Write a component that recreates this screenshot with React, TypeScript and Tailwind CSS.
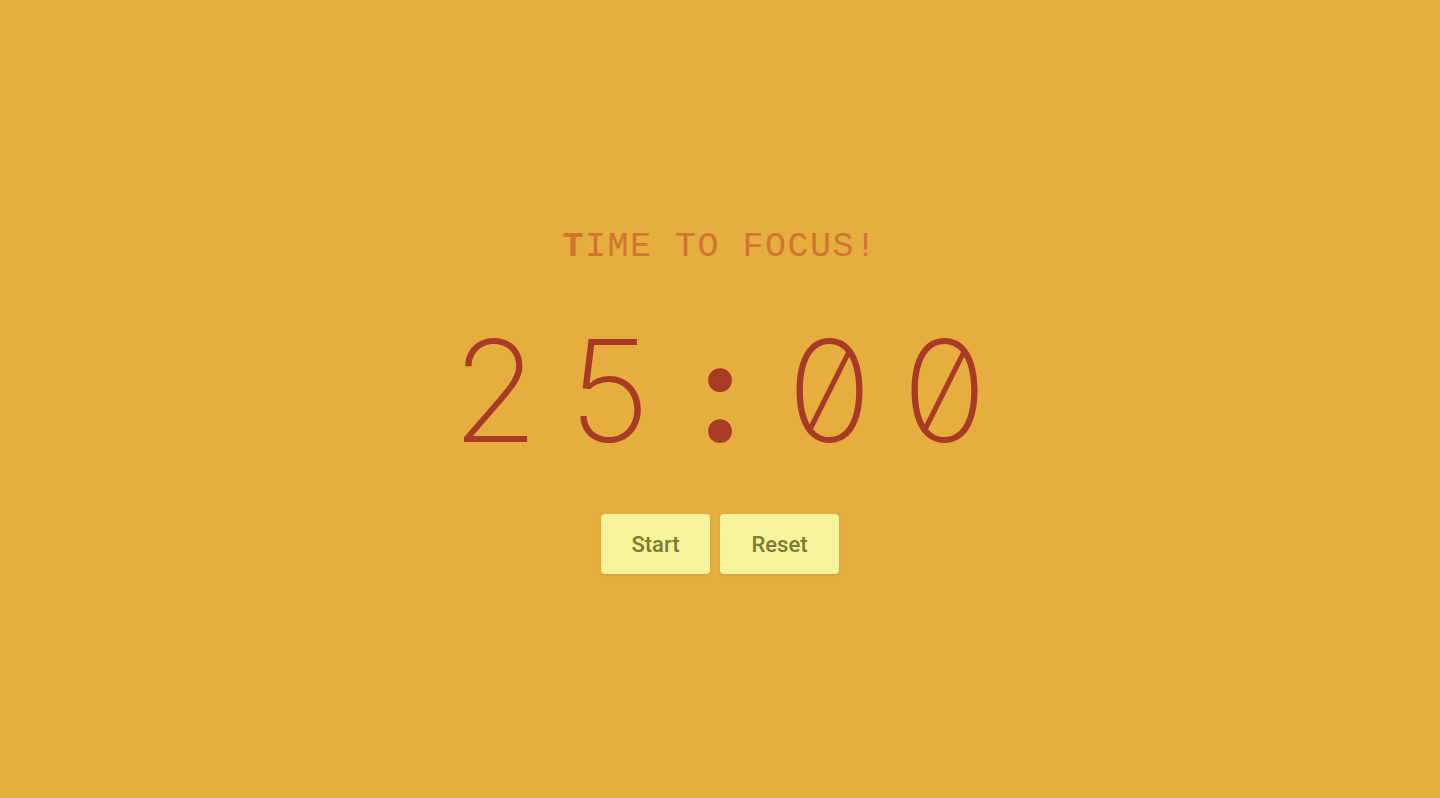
export default function App() {
  return (
    <main className="flex min-h-[798px] w-full flex-col items-center bg-[#e5ae3f] pt-[226px]">
      <h1 className="font-['Liberation_Mono',monospace] text-[35px] leading-[42px] font-normal tracking-[1.5px] text-[#d0752f]">
        <span className="font-bold">T</span>IME TO FOCUS!
      </h1>

      <div className="mt-[48px] flex items-baseline font-['Inter',sans-serif] text-[141px] leading-[150px] font-extralight text-[#a93a26] tabular-nums slashed-zero">
        <span className="tracking-[24px]">2</span>
        <span>5</span>
        <span className="mx-[45px] font-bold">:</span>
        <span className="tracking-[24px]">0</span>
        <span>0</span>
      </div>

      <div className="mt-[48px] flex gap-[10px]">
        <button
          type="button"
          className="h-[60px] w-[109px] rounded-[4px] bg-[#f6f49b] font-['Roboto',sans-serif] text-[22px] font-medium text-[#7f7a33] shadow-[0_1px_3px_rgba(0,0,0,0.12)]"
        >
          Start
        </button>
        <button
          type="button"
          className="h-[60px] w-[119px] rounded-[4px] bg-[#f6f49b] font-['Roboto',sans-serif] text-[22px] font-medium text-[#7f7a33] shadow-[0_1px_3px_rgba(0,0,0,0.12)]"
        >
          Reset
        </button>
      </div>
    </main>
  );
}
